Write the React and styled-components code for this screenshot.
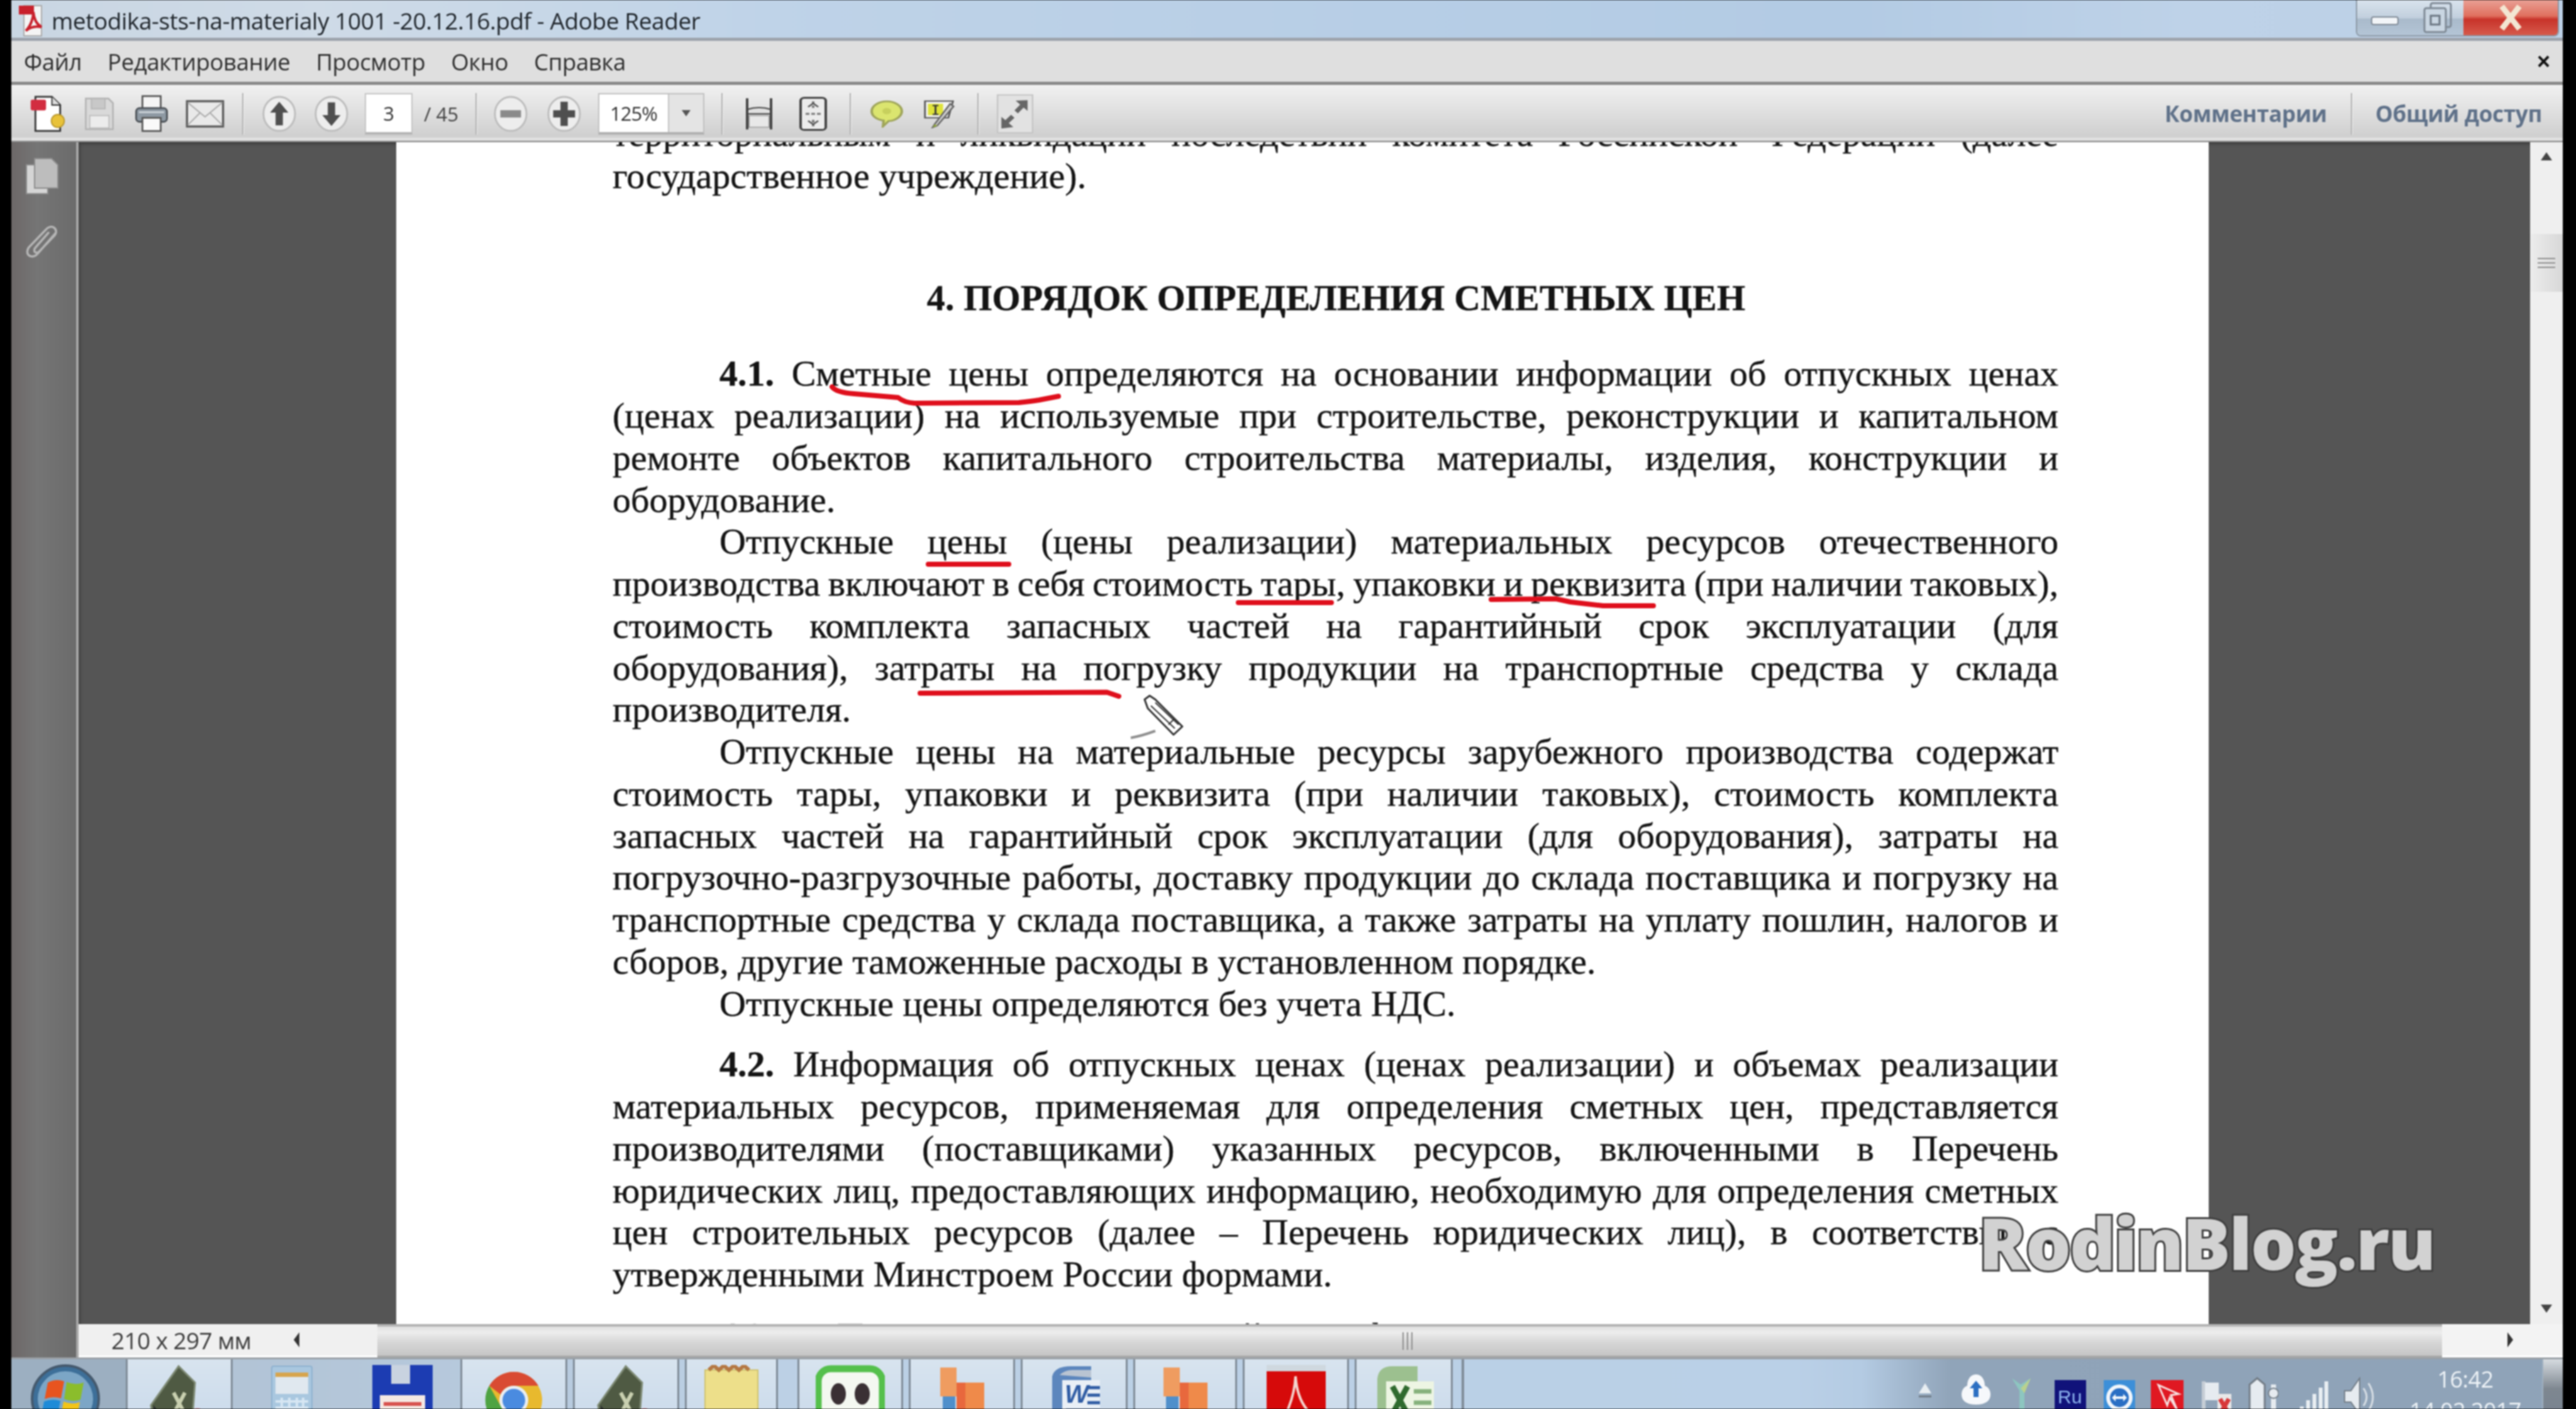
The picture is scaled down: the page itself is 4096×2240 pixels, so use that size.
import React from "react";
import styled, { createGlobalStyle } from "styled-components";

const Global = createGlobalStyle`
  html, body { margin: 0; padding: 0; background: #000; }
  * { box-sizing: border-box; }
`;

const Screen = styled.div`
  width: 4096px;
  height: 2240px;
  padding: 0 21px 0 18px;
  background: #000;
  overflow: hidden;
  display: flex;
  flex-direction: column;
  position: relative;
  filter: blur(1.3px);
  font-family: "Open Sans", "Liberation Sans", sans-serif;
`;

const TitleBar = styled.div`
  height: 65px;
  flex: none;
  display: flex;
  align-items: flex-start;
  padding-left: 10px;
  background: linear-gradient(90deg, #c9d6e3 0, #cfdbe7 12%, #bfd3e8 30%, #b7cee6 55%, #b3cbe4 72%, #bed2e8 85%, #bdd1e7 100%);
  border-bottom: 5px solid #9da3ac;
`;

const DocIcon = styled.svg`
  width: 48px;
  height: 58px;
  flex: none;
  margin-top: 3px;
`;

const TitleText = styled.div`
  margin: 8px 0 0 6px;
  font-size: 37px;
  line-height: 50px;
  color: #20262c;
  letter-spacing: -0.42px;
`;

const WindowButtons = styled.div`
  margin-left: auto;
  margin-right: 6px;
  height: 58px;
  width: 323px;
  display: flex;
  border: 2px solid #8b97a4;
  border-top: 0;
  border-radius: 0 0 8px 8px;
  overflow: hidden;
`;

const WindowButton = styled.div`
  width: ${(p) => p.$w}px;
  display: flex;
  align-items: center;
  justify-content: center;
  background: ${(p) =>
    p.$close
      ? "linear-gradient(180deg, #e9a095 0, #e0705f 45%, #c8332a 55%, #d65a4c 100%)"
      : "linear-gradient(180deg, #d9e3ed 0, #c2d0de 50%, #a9bacb 55%, #b4c5d6 100%)"};
`;

const MenuBar = styled.div`
  height: 70px;
  flex: none;
  display: flex;
  align-items: center;
  gap: 41px;
  padding: 0 20px 0 20px;
  background: #dfdfdf;
  border-bottom: 5px solid #8a8a8a;
`;

const MenuItem = styled.div`
  font-size: 36.6px;
  color: #2e2e2e;
  letter-spacing: -0.4px;
`;

const MenuClose = styled.div`
  margin-left: auto;
  font-family: "Liberation Sans", sans-serif;
  font-size: 36px;
  font-weight: 700;
  color: #111;
`;

const ToolBar = styled.div`
  height: 91px;
  flex: none;
  display: flex;
  align-items: center;
  padding: 0 33px 0 16px;
  background: linear-gradient(180deg, #f1f1f1 0, #e6e6e6 30%, #cfcfcf 90%, #e9e9e9 96%, #6c6c6c 100%);
`;

const Tool = styled.div`
  width: ${(p) => p.$w}px;
  flex: none;
  display: flex;
  align-items: center;
  justify-content: center;
  svg { display: block; }
`;

const ToolSep = styled.div`
  width: 2px;
  height: 66px;
  flex: none;
  margin: 0 ${(p) => p.$mr}px 0 ${(p) => p.$ml}px;
  background: #b0b0b0;
  box-shadow: 1px 0 0 #f2f2f2;
`;

const PageInput = styled.div`
  width: 76px;
  height: 66px;
  flex: none;
  margin-left: 12px;
  display: flex;
  align-items: center;
  justify-content: center;
  background: #fff;
  border: 2px solid #c4c4c4;
  border-bottom: 4px solid #b5b5b5;
  font-size: 31px;
  color: #333;
`;

const PageTotal = styled.div`
  width: 58px;
  flex: none;
  margin-left: 18px;
  font-size: 31px;
  color: #444;
  white-space: nowrap;
`;

const ZoomBox = styled.div`
  width: 169px;
  height: 66px;
  flex: none;
  margin-left: 11px;
  display: flex;
  border: 2px solid #c0c0c0;
  border-bottom: 4px solid #b0b0b0;
  font-size: 31px;
  color: #333;
  letter-spacing: -1px;
`;

const ZoomValue = styled.div`
  flex: 1;
  display: flex;
  align-items: center;
  justify-content: center;
  background: #fff;
`;

const ZoomArrow = styled.div`
  width: 56px;
  display: flex;
  align-items: center;
  justify-content: center;
  border-left: 2px solid #c4c4c4;
  background: #e4e4e4;
`;

const SideLink = styled.div`
  font-size: 35px;
  font-weight: 700;
  color: #5f7189;
  margin-left: ${(p) => (p.$push ? "auto" : "0")};
  letter-spacing: -0.3px;
  white-space: nowrap;
`;

const WorkArea = styled.div`
  flex: none;
  height: 1932px;
  display: flex;
`;

const NavPanel = styled.div`
  width: 107px;
  flex: none;
  display: flex;
  flex-direction: column;
  align-items: flex-start;
  gap: 48px;
  padding: 24px 0 0 22px;
  background: linear-gradient(90deg, #6d6868 0, #757575 40%, #6c6c6c 95%);
  border-right: 4px solid #a8a8a8;
  box-shadow: inset -1px 0 0 #666;
`;

const Center = styled.div`
  flex: 1;
  min-width: 0;
  display: flex;
  flex-direction: column;
`;

const ViewRow = styled.div`
  height: 1879px;
  flex: none;
  display: flex;
`;

const Canvas = styled.div`
  flex: 1;
  min-width: 0;
  padding: 0 511px 0 505px;
  background: #555;
  box-shadow: inset 0 6px 5px -3px #3d3d3d, inset 6px 0 5px -4px #3d3d3d;
  overflow: hidden;
`;

const Page = styled.div`
  position: relative;
  width: 2882px;
  height: 100%;
  padding: 0 239px 0 344px;
  background: #fff;
  overflow: hidden;
  font-family: "Liberation Serif", "Times New Roman", serif;
  font-size: 58px;
  line-height: 66.75px;
  color: #141414;
  -webkit-text-stroke: 0.4px #141414;
`;

const Sheet = styled.div`
  margin-top: -46px;
`;

const Line = styled.div`
  display: block;
  white-space: nowrap;
  text-align: justify;
  text-align-last: ${(p) => (p.$last ? "left" : "justify")};
  padding-left: ${(p) => (p.$indent ? 170 : 0)}px;
  word-spacing: ${(p) => (p.$tight ? "-2.2px" : "normal")};
`;

const Heading = styled.div`
  margin: 127px 0 54px;
  padding-left: 2px;
  text-align: center;
  font-weight: 700;
  letter-spacing: 0.15px;
`;

const Para = styled.div`
  margin-top: ${(p) => p.$gap || 0}px;
`;

const Marks = styled.svg`
  position: absolute;
  left: 0;
  top: 0;
  width: 2882px;
  height: 1879px;
  pointer-events: none;
`;

const VScroll = styled.div`
  width: 52px;
  flex: none;
  position: relative;
  display: flex;
  flex-direction: column;
  align-items: center;
  justify-content: space-between;
  padding: 16px 0 18px;
  background: #efefef;
  font-size: 30px;
  color: #444;
`;

const VThumb = styled.div`
  position: absolute;
  left: 0;
  right: 0;
  top: 146px;
  height: 92px;
  display: flex;
  flex-direction: column;
  justify-content: center;
  align-items: center;
  gap: 5px;
  background: linear-gradient(90deg, #ececec, #d8d8d8);
`;

const GripLine = styled.div`
  width: ${(p) => (p.$v ? "2px" : "28px")};
  height: ${(p) => (p.$v ? "28px" : "2px")};
  background: #8d8d8d;
`;

const StatusRow = styled.div`
  height: 53px;
  flex: none;
  display: flex;
`;

const SizeBox = styled.div`
  width: 475px;
  flex: none;
  display: flex;
  align-items: center;
  padding-left: 52px;
  background: #f0f0f0;
  border-bottom: 3px solid #fff;
  font-size: 37px;
  color: #3c3c3c;
  letter-spacing: -0.6px;
`;

const HThumb = styled.div`
  flex: 1;
  display: flex;
  align-items: center;
  justify-content: center;
  gap: 5px;
  padding-right: 7px;
  background: linear-gradient(180deg, #e0e0e0 0, #ededed 20%, #d6d6d6 55%, #c6c6c6 100%);
  border-top: 4px solid #b3b3b3;
  border-bottom: 3px solid #a9a9a9;
`;

const HEnd = styled.div`
  width: 192px;
  flex: none;
  display: flex;
  align-items: center;
  padding-left: 104px;
  background: #f3f3f3;
  border-bottom: 3px solid #fff;
  font-size: 30px;
  color: #444;
`;

const Triangle = styled.div`
  width: 0;
  height: 0;
  flex: none;
  margin-left: ${(p) => p.$ml || 0}px;
  border-style: solid;
  border-color: transparent;
  ${(p) => p.$dir === "left" && "border-width: 12px 9px 12px 0; border-right-color: #333;"}
  ${(p) => p.$dir === "right" && "border-width: 12px 0 12px 9px; border-left-color: #333;"}
  ${(p) => p.$dir === "up" && "border-width: 0 9px 13px 9px; border-bottom-color: #444;"}
  ${(p) => p.$dir === "down" && "border-width: 13px 9px 0 9px; border-top-color: #444;"}
  ${(p) => p.$dir === "small" && "border-width: 10px 7px 0 7px; border-top-color: #555;"}
`;

const TaskBar = styled.div`
  flex: 1;
  min-height: 0;
  display: flex;
  overflow: hidden;
  background: linear-gradient(90deg, #aebfd0 0, #bcd0e5 30%, #bad0e7 70%, #b4cbe3 72.5%, #90a4b9 76%, #8fa3b8 100%);
  border-top: 3px solid #9aa0a6;
`;

const StartSlot = styled.div`
  width: 182px;
  flex: none;
  padding: 7px 0 0 30px;
  background: #9cafc1;
`;

const TaskGroup = styled.div`
  display: flex;
  gap: 9px;
  margin-left: ${(p) => p.$ml || 0}px;
`;

const TaskButton = styled.div`
  width: ${(p) => p.$w}px;
  flex: none;
  display: flex;
  justify-content: center;
  padding-top: 9px;
  ${(p) =>
    !p.$plain &&
    `background: linear-gradient(180deg, #d8e4ef 0, #cddcec 100%);
     border-left: 3px solid #7f8b97;
     border-right: 3px solid #7f8b97;`}
`;

const TaskEnd = styled.div`
  width: 4px;
  margin-left: 14px;
  flex: none;
  background: #7f8b97;
`;

const Tray = styled.div`
  margin-left: auto;
  display: flex;
  align-items: flex-start;
`;

const TrayIcon = styled.div`
  width: ${(p) => p.$w}px;
  margin-left: ${(p) => p.$ml}px;
  padding-top: ${(p) => p.$top || 33}px;
  flex: none;
  display: flex;
  justify-content: center;
`;

const Clock = styled.div`
  width: 244px;
  margin-left: 22px;
  flex: none;
  text-align: center;
  color: #eef3f7;
  font-size: 36px;
  line-height: 50px;
  padding-top: 7px;
  letter-spacing: -0.6px;
  white-space: nowrap;
`;

const ShowDesktop = styled.div`
  width: 33px;
  flex: none;
  background: linear-gradient(180deg, #d6dbe0, #7e8790 60%, #7a8490);
  border-left: 2px solid #9fb0c0;
`;

const Watermark = styled.div`
  position: absolute;
  left: 3146px;
  top: 1907px;
  font-family: "Open Sans", "Liberation Sans", sans-serif;
  font-size: 114px;
  line-height: 136px;
  font-weight: 800;
  letter-spacing: -2.5px;
  color: #d2d2d2;
  -webkit-text-stroke: 6px #3f3f3f;
  paint-order: stroke fill;
  white-space: nowrap;
`;

const PdfDocIcon = () => (
  <DocIcon viewBox="0 0 48 58">
    <path d="M10 6h28v48H10z" fill="#f4f4f4" stroke="#aaa" strokeWidth="2" />
    <path d="M2 6h24v14H2z" fill="#c8202c" />
    <path d="M13 46c8-8 12-20 12-30 1 12 6 20 13 24-9-2-18 0-25 6z" fill="none" stroke="#c8202c" strokeWidth="4" />
  </DocIcon>
);

const NewDoc = () => (
  <svg width="60" height="60" viewBox="0 0 62 64">
    <path d="M10 3h28l14 14v44H10z" fill="#fff" stroke="#333" strokeWidth="3" />
    <path d="M38 3v14h14" fill="#ddd" stroke="#333" strokeWidth="2" />
    <rect x="2" y="8" width="26" height="18" rx="3" fill="#d22d40" />
    <circle cx="48" cy="44" r="11" fill="#e8c23a" stroke="#b8962a" strokeWidth="2" />
  </svg>
);

const Floppy = () => (
  <svg width="50" height="54" viewBox="0 0 54 60">
    <path d="M3 3h40l8 8v46H3z" fill="#d9d9d9" stroke="#b5b5b5" strokeWidth="3" />
    <rect x="13" y="3" width="24" height="18" fill="#c8c8c8" stroke="#b5b5b5" strokeWidth="2" />
    <rect x="10" y="33" width="34" height="22" fill="#ececec" stroke="#bcbcbc" strokeWidth="2" />
  </svg>
);

const Printer = () => (
  <svg width="56" height="60" viewBox="0 0 60 66">
    <rect x="14" y="2" width="32" height="24" fill="#f5f5f5" stroke="#555" strokeWidth="3" />
    <rect x="3" y="23" width="54" height="24" rx="6" fill="#8e99a3" stroke="#4a4f55" strokeWidth="3" />
    <rect x="14" y="40" width="32" height="23" fill="#fafafa" stroke="#555" strokeWidth="3" />
    <path d="M8 30h44" stroke="#cdd4da" strokeWidth="3" />
  </svg>
);

const Mail = () => (
  <svg width="62" height="44" viewBox="0 0 64 46">
    <rect x="2" y="2" width="60" height="42" fill="#e9e9e9" stroke="#5a5a5a" strokeWidth="3.5" />
    <path d="M3 4l29 24L61 4M3 42l20-20M61 42L41 22" fill="none" stroke="#a8a8a8" strokeWidth="2" />
  </svg>
);

const RoundIcon = ({ kind, muted }) => {
  const ink = muted ? "#8a8a8a" : "#4f4f4f";
  return (
    <svg width="58" height="60" viewBox="0 0 60 62">
      <ellipse cx="30" cy="31" rx="26" ry="28" fill="#ededed" stroke="#bdbdbd" strokeWidth="3" />
      {kind === "up" && <path d="M30 11L15 29h9v21h12V29h9z" fill={ink} />}
      {kind === "down" && <path d="M30 51L15 33h9V12h12v21h9z" fill={ink} />}
      {kind === "minus" && <rect x="13" y="25" width="34" height="12" fill={ink} />}
      {kind === "plus" && <path d="M24 11h12v14h12v12H36v14H24V37H12V25h12z" fill={ink} />}
    </svg>
  );
};

const FitWidth = () => (
  <svg width="44" height="54" viewBox="0 0 44 76" preserveAspectRatio="none">
    <path d="M3 3v70M41 3v70" stroke="#444" strokeWidth="4" />
    <path d="M3 28q19 -8 38 0M3 38h38" stroke="#444" strokeWidth="3" fill="none" />
    <rect x="6" y="42" width="32" height="26" fill="#e8e8e8" stroke="#999" strokeWidth="2" />
  </svg>
);

const FitPage = () => (
  <svg width="44" height="54" viewBox="0 0 44 74" preserveAspectRatio="none">
    <rect x="2" y="2" width="40" height="70" rx="6" fill="#ececec" stroke="#444" strokeWidth="4" />
    <path d="M22 10v14M22 50v14M10 37h24" stroke="#777" strokeWidth="4" strokeDasharray="6 3" />
    <path d="M14 22l8-8 8 8M14 52l8 8 8-8" fill="none" stroke="#555" strokeWidth="3" />
  </svg>
);

const Bubble = () => (
  <svg width="54" height="44" viewBox="0 0 54 62" preserveAspectRatio="none">
    <path d="M27 3c13 0 24 10 24 22S40 47 30 47l-9 12 1-13C11 44 3 36 3 25 3 13 14 3 27 3z" fill="#dbe56f" stroke="#9fa55a" strokeWidth="4" />
    <circle cx="27" cy="25" r="7" fill="#c7d05d" />
  </svg>
);

const Highlight = () => (
  <svg width="52" height="46" viewBox="0 0 56 66" preserveAspectRatio="none">
    <path d="M3 4h48l-8 38H3z" fill="#f3f3f3" stroke="#555" strokeWidth="3" />
    <rect x="8" y="10" width="26" height="26" fill="#dfe33a" />
    <path d="M21 14v20M16 14h10M16 34h10" stroke="#333" strokeWidth="3" />
    <path d="M46 10L20 56l-4 8 8-4 28-44z" fill="#cfcfcf" stroke="#666" strokeWidth="3" />
    <path d="M16 64l4-7 4 3z" fill="#9db82e" />
  </svg>
);

const Expand = () => (
  <svg width="58" height="62" viewBox="0 0 64 80" preserveAspectRatio="none">
    <rect x="1" y="1" width="62" height="78" fill="#e2e2e2" stroke="#c4c4c4" strokeWidth="3" />
    <path d="M54 12v22l-7-7-10 12-6-6 10-12-8-8z" fill="#666" />
    <path d="M8 70V46l7 7 10-11 6 6-10 11 8 8z" fill="#666" />
  </svg>
);

const PagesIcon = () => (
  <svg width="54" height="60" viewBox="0 0 54 60">
    <rect x="2" y="12" width="34" height="46" fill="#d5d5d5" stroke="#8c8c8c" strokeWidth="2" />
    <path d="M15 2h27l10 10v37H15z" fill="#bdbdbd" stroke="#8c8c8c" strokeWidth="2" />
  </svg>
);

const ClipIcon = () => (
  <svg width="54" height="58" viewBox="0 0 54 58">
    <path d="M48 13L20 45c-4 5-10 6-14 3s-3-10 1-14L33 7c3-4 9-6 13-3s4 8 1 12L23 41c-2 3-5 3-7 2s-2-5 0-7l21-24" fill="none" stroke="#b5b5b5" strokeWidth="3.5" strokeLinecap="round" />
  </svg>
);

const Orb = () => (
  <svg width="112" height="112" viewBox="0 0 112 112">
    <circle cx="56" cy="56" r="53" fill="#3d6f99" stroke="#45596d" strokeWidth="4" />
    <circle cx="56" cy="56" r="44" fill="#7ca6c6" />
    <path d="M28 30q13-7 26-2l-5 27q-13-4-26 1z" fill="#e8541f" />
    <path d="M58 29q13 6 27 1l-5 27q-13 5-26-1z" fill="#8bbd2c" />
    <path d="M22 60q13-5 26-1l-5 27q-13-5-26 1z" fill="#1e8bd8" />
    <path d="M53 60q13 6 26 1l-5 27q-13 5-26-1z" fill="#f2c417" />
  </svg>
);

const FormulaIcon = () => (
  <svg width="98" height="110" viewBox="0 0 98 110">
    <path d="M48 2l26 26-6 82H12L4 64z" fill="#4f5a43" stroke="#7e8a74" strokeWidth="3" />
    <path d="M8 64l36 46H14z" fill="#25282c" />
    <path d="M40 44l18 34M58 44L40 78" stroke="#c9d0b0" strokeWidth="6" />
    <circle cx="78" cy="84" r="15" fill="#d16a6a" />
  </svg>
);

const CalcIcon = () => (
  <svg width="68" height="100" viewBox="0 0 68 100">
    <rect x="2" y="2" width="64" height="100" rx="3" fill="#a9c7df" stroke="#8db1cf" strokeWidth="2" />
    <rect x="8" y="12" width="52" height="34" fill="#e0e8ef" />
    <rect x="8" y="12" width="52" height="7" fill="#d7a54e" />
    <path d="M8 58h52M8 68h52M8 78h52M8 88h52M18 52v46M30 52v46M42 52v46M52 52v46" stroke="#d6e6f3" strokeWidth="4" />
  </svg>
);

const FloppyTask = () => (
  <svg width="96" height="110" viewBox="0 0 96 110">
    <path d="M0 0h96v110H0z" fill="#1c3cb2" />
    <rect x="30" y="0" width="30" height="30" fill="#c9d3e0" />
    <rect x="12" y="48" width="72" height="62" fill="#f5e9e3" />
    <path d="M18 62h60M18 76h50M18 90h50" stroke="#d8534f" strokeWidth="6" />
    <circle cx="84" cy="92" r="14" fill="#d8b13b" />
  </svg>
);

const ChromeIcon = () => (
  <svg width="92" height="110" viewBox="0 0 92 110">
    <circle cx="46" cy="56" r="45" fill="#e8b92e" />
    <path d="M46 11a45 45 0 0 1 39 22H46a22 22 0 0 0-21 14L7 33a45 45 0 0 1 39-22z" fill="#d94b33" />
    <path d="M7 33l19 34 20 34A45 45 0 0 1 7 33z" fill="#4ea343" />
    <circle cx="46" cy="56" r="23" fill="#e9eef3" />
    <circle cx="46" cy="56" r="18" fill="#4a8be0" />
  </svg>
);

const NoteIcon = () => (
  <svg width="88" height="110" viewBox="0 0 88 110">
    <rect x="2" y="8" width="84" height="102" fill="#eddf8a" stroke="#cfc26e" strokeWidth="2" />
    <path d="M8 8l8-7 8 7 8-7 8 7 8-7 8 7 8-7 8 7" fill="none" stroke="#b57842" strokeWidth="6" />
    <rect x="20" y="82" width="50" height="30" fill="#a8cde2" />
  </svg>
);

const RoboIcon = () => (
  <svg width="110" height="110" viewBox="0 0 110 110">
    <rect x="4" y="6" width="102" height="100" rx="20" fill="#f4f8f1" stroke="#55c04c" strokeWidth="11" />
    <ellipse cx="36" cy="46" rx="12" ry="17" fill="#3a3034" />
    <ellipse cx="74" cy="46" rx="12" ry="17" fill="#3a3034" />
    <path d="M6 78h98v24H6z" fill="#55c04c" />
  </svg>
);

const BarsIcon = () => (
  <svg width="90" height="110" viewBox="0 0 90 110">
    <rect x="10" y="4" width="26" height="46" fill="#ef9c60" />
    <rect x="14" y="50" width="20" height="60" fill="#4f8fcb" />
    <rect x="36" y="28" width="14" height="82" fill="#e8683d" />
    <rect x="50" y="28" width="30" height="44" fill="#ef8a4a" />
    <rect x="54" y="72" width="22" height="38" fill="#4f8fcb" />
  </svg>
);

const WordIcon = () => (
  <svg width="90" height="110" viewBox="0 0 90 110">
    <path d="M10 18Q14 2 40 2h32v108H26Q10 110 10 90z" fill="#5c86bd" />
    <path d="M22 16Q30 8 42 8h30v12z" fill="#b9c4d2" />
    <path d="M26 24h60v86H26z" fill="#e9eff6" />
    <text x="30" y="60" fontFamily="Liberation Sans, sans-serif" fontSize="40" fontWeight="700" fontStyle="italic" fill="#2f5ca4">W</text>
    <path d="M66 36h20M66 48h20M66 60h20M32 72h54M32 84h54M32 96h54" stroke="#2f5ca4" strokeWidth="5" />
  </svg>
);

const AcrobatIcon = () => (
  <svg width="94" height="110" viewBox="0 0 94 110">
    <rect x="0" y="4" width="94" height="106" fill="#d60a0a" />
    <rect x="0" y="0" width="94" height="10" fill="#cfd8df" />
    <path d="M14 104c16-20 30-50 32-86 2 30 12 54 36 68-22-6-48 0-68 18z" fill="none" stroke="#f3d5cf" strokeWidth="4" />
  </svg>
);

const ExcelIcon = () => (
  <svg width="96" height="110" viewBox="0 0 96 110">
    <path d="M6 22Q8 2 30 2h40v108H24Q6 110 6 90z" fill="#9cc08f" />
    <path d="M20 26h76v84H20z" fill="#edf5e3" />
    <path d="M30 34l24 44M54 34L30 78" stroke="#2f6a2e" strokeWidth="9" />
    <path d="M64 42h28M64 60h28M64 78h28M30 90h62M50 84v26M70 84v26" stroke="#86b17c" strokeWidth="7" />
  </svg>
);

const TrayUp = () => (
  <svg width="24" height="34" viewBox="0 0 24 34">
    <path d="M12 8L2 24h20z" fill="#e8eef2" />
    <path d="M2 29h20" stroke="#6f7a85" strokeWidth="3" />
  </svg>
);

const TrayCloud = () => (
  <svg width="48" height="70" viewBox="0 0 48 70">
    <path d="M24 2C34 2 38 12 38 20c6 2 9 8 9 14 0 10-8 16-23 16S1 44 1 34c0-6 3-12 9-14C10 12 14 2 24 2z" fill="#f6f8fb" />
    <path d="M24 12l10 12h-6v14h-8V24h-6z" fill="#2c6fc2" />
  </svg>
);

const TrayBird = () => (
  <svg width="34" height="56" viewBox="0 0 34 56">
    <path d="M2 4l14 10L32 4 22 24v30h-8V24z" fill="#8dc6c0" />
    <path d="M16 20l16-16-10 24z" fill="#bad18e" />
  </svg>
);

const TrayRu = () => (
  <svg width="50" height="56" viewBox="0 0 50 56">
    <rect width="50" height="56" fill="#10127a" />
    <text x="5" y="37" fontFamily="Liberation Sans, sans-serif" fontSize="30" fill="#8fb6f0">Ru</text>
  </svg>
);

const TrayTeam = () => (
  <svg width="50" height="56" viewBox="0 0 50 56">
    <rect width="50" height="56" fill="#3d8fd8" />
    <circle cx="25" cy="28" r="21" fill="#f2f6fb" />
    <circle cx="25" cy="28" r="15" fill="#2a6fc4" />
    <path d="M13 28l6-6v4h12v-4l6 6-6 6v-4H19v4z" fill="#f2f6fb" />
  </svg>
);

const TrayRed = () => (
  <svg width="52" height="56" viewBox="0 0 52 56">
    <rect width="52" height="56" fill="#e01822" />
    <path d="M12 8l14 32 4-12 12 20-10-24 12-2z" fill="none" stroke="#f6e0e0" strokeWidth="3" />
  </svg>
);

const TrayFlag = () => (
  <svg width="50" height="60" viewBox="0 0 50 60">
    <path d="M4 2v58" stroke="#c5cdd5" strokeWidth="6" />
    <path d="M6 4h22v28H6z" fill="#e6ebf0" />
    <rect x="26" y="22" width="22" height="38" fill="#e8e8e8" />
    <path d="M30 30l14 24M44 30L30 54" stroke="#d8383a" strokeWidth="7" />
  </svg>
);

const TrayPlug = () => (
  <svg width="50" height="60" viewBox="0 0 50 60">
    <path d="M16 2l12 10v48H4V12z" fill="#e6ebf0" stroke="#737d87" strokeWidth="3" />
    <path d="M42 12v48" stroke="#e6ebf0" strokeWidth="8" />
    <circle cx="42" cy="26" r="8" fill="#e6ebf0" stroke="#737d87" strokeWidth="2" />
  </svg>
);

const TraySignal = () => (
  <svg width="48" height="60" viewBox="0 0 48 60">
    <path d="M6 60V42M16 60V32M26 60V22M36 60V12M45 60V2" stroke="#e9eef2" strokeWidth="6" />
  </svg>
);

const TraySpeaker = () => (
  <svg width="50" height="60" viewBox="0 0 50 60">
    <path d="M2 22h10L26 2v58L12 40H2z" fill="#e6ebf0" stroke="#737d87" strokeWidth="2" />
    <path d="M32 18q10 14 0 28M40 10q14 22 0 44" fill="none" stroke="#d8dfe5" strokeWidth="3" />
  </svg>
);

const XGlyph = () => (
  <svg width="40" height="44" viewBox="0 0 40 44">
    <path d="M6 4l28 36M34 4L6 40" stroke="#f3e7d3" strokeWidth="9" />
  </svg>
);

const Page41 = [
  [<><b>4.1.</b> Сметные цены определяются на основании информации об отпускных ценах</>, true],
  ["(ценах реализации) на используемые при строительстве, реконструкции и капитальном"],
  ["ремонте объектов капитального строительства материалы, изделия, конструкции и"],
  ["оборудование.", false, true],
  ["Отпускные цены (цены реализации) материальных ресурсов отечественного", true],
  ["производства включают в себя стоимость тары, упаковки и реквизита (при наличии таковых),", false, false, true],
  ["стоимость комплекта запасных частей на гарантийный срок эксплуатации (для"],
  ["оборудования), затраты на погрузку продукции на транспортные средства у склада"],
  ["производителя.", false, true],
  ["Отпускные цены на материальные ресурсы зарубежного производства содержат", true],
  ["стоимость тары, упаковки и реквизита (при наличии таковых), стоимость комплекта"],
  ["запасных частей на гарантийный срок эксплуатации (для оборудования), затраты на"],
  ["погрузочно-разгрузочные работы, доставку продукции до склада поставщика и погрузку на"],
  ["транспортные средства у склада поставщика, а также затраты на уплату пошлин, налогов и"],
  ["сборов, другие таможенные расходы в установленном порядке.", false, true],
  ["Отпускные цены определяются без учета НДС.", true, true],
];

const Page42 = [
  [<><b>4.2.</b> Информация об отпускных ценах (ценах реализации) и объемах реализации</>, true],
  ["материальных ресурсов, применяемая для определения сметных цен, представляется"],
  ["производителями (поставщиками) указанных ресурсов, включенными в Перечень"],
  ["юридических лиц, предоставляющих информацию, необходимую для определения сметных"],
  ["цен строительных ресурсов (далее – Перечень юридических лиц), в соответствии с"],
  ["утвержденными Минстроем России формами.", false, true],
];

const renderLines = (lines) =>
  lines.map(([text, indent, last, tight], i) => (
    <Line key={i} $indent={indent} $last={last} $tight={tight}>
      {text}
    </Line>
  ));

export default function App() {
  return (
    <>
      <Global />
      <Screen>
        <TitleBar>
          <PdfDocIcon />
          <TitleText>metodika-sts-na-materialy 1001 -20.12.16.pdf - Adobe Reader</TitleText>
          <WindowButtons>
            <WindowButton $w={89}>
              <svg width="46" height="30" viewBox="0 0 46 30"><rect x="2" y="14" width="42" height="12" rx="3" fill="#f2f5f8" stroke="#7f8a96" strokeWidth="2" /></svg>
            </WindowButton>
            <WindowButton $w={82}>
              <svg width="50" height="50" viewBox="0 0 50 50">
                <rect x="14" y="2" width="32" height="38" rx="3" fill="none" stroke="#7f8a96" strokeWidth="3" />
                <rect x="4" y="10" width="34" height="38" rx="3" fill="#c9d6e2" stroke="#7f8a96" strokeWidth="3" />
                <rect x="14" y="22" width="14" height="14" fill="none" stroke="#6b7682" strokeWidth="3" />
              </svg>
            </WindowButton>
            <WindowButton $w={152} $close>
              <XGlyph />
            </WindowButton>
          </WindowButtons>
        </TitleBar>

        <MenuBar>
          <MenuItem>Файл</MenuItem>
          <MenuItem>Редактирование</MenuItem>
          <MenuItem>Просмотр</MenuItem>
          <MenuItem>Окно</MenuItem>
          <MenuItem>Справка</MenuItem>
          <MenuClose>×</MenuClose>
        </MenuBar>

        <ToolBar>
          <Tool $w={84}><NewDoc /></Tool>
          <Tool $w={80}><Floppy /></Tool>
          <Tool $w={86}><Printer /></Tool>
          <Tool $w={84}><Mail /></Tool>
          <ToolSep $ml={17} $mr={15} />
          <Tool $w={84}><RoundIcon kind="up" /></Tool>
          <Tool $w={82}><RoundIcon kind="down" /></Tool>
          <PageInput>3</PageInput>
          <PageTotal>/ 45</PageTotal>
          <ToolSep $ml={24} $mr={12} />
          <Tool $w={84}><RoundIcon kind="minus" muted /></Tool>
          <Tool $w={86}><RoundIcon kind="plus" /></Tool>
          <ZoomBox>
            <ZoomValue>125%</ZoomValue>
            <ZoomArrow><Triangle $dir="small" /></ZoomArrow>
          </ZoomBox>
          <ToolSep $ml={27} $mr={14} />
          <Tool $w={88}><FitWidth /></Tool>
          <Tool $w={84}><FitPage /></Tool>
          <ToolSep $ml={16} $mr={15} />
          <Tool $w={84}><Bubble /></Tool>
          <Tool $w={84}><Highlight /></Tool>
          <ToolSep $ml={18} $mr={16} />
          <Tool $w={84}><Expand /></Tool>
          <SideLink $push>Комментарии</SideLink>
          <ToolSep $ml={38} $mr={37} />
          <SideLink>Общий доступ</SideLink>
        </ToolBar>

        <WorkArea>
          <NavPanel>
            <PagesIcon />
            <ClipIcon />
          </NavPanel>
          <Center>
            <ViewRow>
              <Canvas>
                <Page>
                  <Sheet>
                    <Line>территориальным и ликвидации последствий комитета Российской Федерации (далее</Line>
                    <Line $last>государственное учреждение).</Line>
                    <Heading>4. ПОРЯДОК ОПРЕДЕЛЕНИЯ СМЕТНЫХ ЦЕН</Heading>
                    <Para>{renderLines(Page41)}</Para>
                    <Para $gap={30}>{renderLines(Page42)}</Para>
                    <Para $gap={31}>
                      <Line $indent>
                        <b>4.3.</b> Представление ценовой информации производителями ресурсов
                      </Line>
                    </Para>
                  </Sheet>
                  <Marks viewBox="630 226 2882 1879">
                    <g fill="none" stroke="#df0f1c" strokeWidth="8" strokeLinecap="round" strokeLinejoin="round">
                      <path d="M1323 615Q1330 624 1358 626L1428 632Q1438 640 1454 641L1620 640Q1640 638 1652 636L1683 630" />
                      <path d="M1476 897H1604" />
                      <path d="M1463 1102L1760 1100.5L1779 1107" />
                      <path d="M1969 958H2117" />
                      <path d="M2371 953L2474 952L2497 957L2549 963H2629" />
                    </g>
                    <g fill="#fff" stroke="#333" strokeWidth="3" strokeLinejoin="round">
                      <path d="M1820 1112L1828 1106L1837 1112L1880 1155L1866 1168L1825 1126z" />
                      <path d="M1830 1122L1868 1158M1837 1117L1874 1152M1858 1152L1867 1143" fill="none" strokeWidth="2" />
                    </g>
                    <path d="M1798 1173Q1815 1170 1837 1162" fill="none" stroke="#8f8f8f" strokeWidth="4" />
                  </Marks>
                </Page>
              </Canvas>
              <VScroll>
                <Triangle $dir="up" />
                <VThumb>
                  <GripLine />
                  <GripLine />
                  <GripLine />
                </VThumb>
                <Triangle $dir="down" />
              </VScroll>
            </ViewRow>
            <StatusRow>
              <SizeBox>
                210 x 297 мм
                <Triangle $dir="left" $ml={68} />
              </SizeBox>
              <HThumb>
                <GripLine $v />
                <GripLine $v />
                <GripLine $v />
              </HThumb>
              <HEnd><Triangle $dir="right" /></HEnd>
            </StatusRow>
          </Center>
        </WorkArea>

        <TaskBar>
          <StartSlot><Orb /></StartSlot>
          <TaskGroup>
            <TaskButton $w={170}><FormulaIcon /></TaskButton>
            <TaskButton $w={169} $plain><CalcIcon /></TaskButton>
            <TaskButton $w={166} $plain><FloppyTask /></TaskButton>
            <TaskButton $w={170}><ChromeIcon /></TaskButton>
            <TaskButton $w={169}><FormulaIcon /></TaskButton>
            <TaskButton $w={148}><NoteIcon /></TaskButton>
          </TaskGroup>
          <TaskGroup $ml={31}>
            <TaskButton $w={168}><RoboIcon /></TaskButton>
            <TaskButton $w={169}><BarsIcon /></TaskButton>
            <TaskButton $w={170}><WordIcon /></TaskButton>
            <TaskButton $w={165}><BarsIcon /></TaskButton>
            <TaskButton $w={169}><AcrobatIcon /></TaskButton>
            <TaskButton $w={156}><ExcelIcon /></TaskButton>
          </TaskGroup>
          <TaskEnd />
          <Tray>
            <TrayIcon $w={24} $ml={0} $top={30}><TrayUp /></TrayIcon>
            <TrayIcon $w={48} $ml={45} $top={22}><TrayCloud /></TrayIcon>
            <TrayIcon $w={34} $ml={31} $top={26}><TrayBird /></TrayIcon>
            <TrayIcon $w={50} $ml={36}><TrayRu /></TrayIcon>
            <TrayIcon $w={50} $ml={28}><TrayTeam /></TrayIcon>
            <TrayIcon $w={52} $ml={25}><TrayRed /></TrayIcon>
            <TrayIcon $w={50} $ml={28}><TrayFlag /></TrayIcon>
            <TrayIcon $w={50} $ml={23} $top={28}><TrayPlug /></TrayIcon>
            <TrayIcon $w={48} $ml={31}><TraySignal /></TrayIcon>
            <TrayIcon $w={50} $ml={24} $top={28}><TraySpeaker /></TrayIcon>
            <Clock>
              16:42
              <br />
              14.02.2017
            </Clock>
          </Tray>
          <ShowDesktop />
        </TaskBar>

        <Watermark>RodinBlog.ru</Watermark>
      </Screen>
    </>
  );
}
